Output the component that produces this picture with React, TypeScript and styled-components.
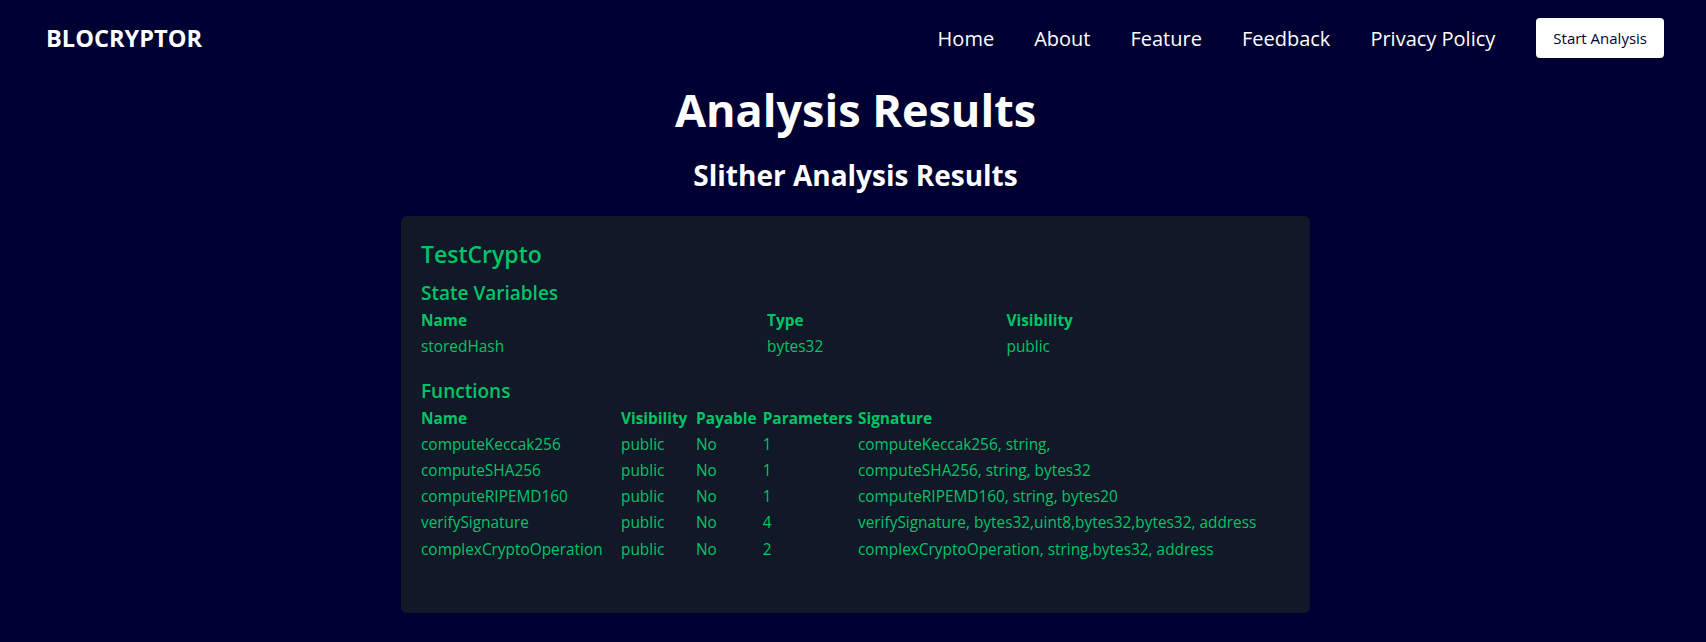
import React from 'react';
import styled, { createGlobalStyle } from 'styled-components';

const GREEN = '#00c466';

const GlobalStyle = createGlobalStyle`
  html, body {
    margin: 0;
    padding: 0;
    background: #000033;
  }
  body {
    font-family: "Open Sans", "Liberation Sans", sans-serif;
    color: #ffffff;
  }
`;

const Page = styled.div`
  min-height: 642px;
  background: #000033;
`;

const Navbar = styled.nav`
  display: flex;
  align-items: center;
  justify-content: space-between;
  height: 75px;
  padding: 1px 42px 0 46px;
  box-sizing: border-box;
`;

const Logo = styled.div`
  font-size: 23.6px;
  font-weight: 700;
  color: #ffffff;
`;

const NavRight = styled.div`
  display: flex;
  align-items: center;
  gap: 41px;
`;

const NavList = styled.ul`
  display: flex;
  align-items: center;
  gap: 40px;
  list-style: none;
  margin: 0;
  padding: 0;
`;

const NavLink = styled.a`
  color: #ffffff;
  font-size: 20px;
  text-decoration: none;
`;

const StartButton = styled.button`
  background: #ffffff;
  color: #000033;
  border: none;
  border-radius: 4px;
  height: 40px;
  padding: 0 17px;
  font-size: 15px;
  font-family: inherit;
  cursor: pointer;
`;

const Main = styled.main`
  padding-left: 5px;
  text-align: center;
`;

const Title = styled.h1`
  margin: 8px 0 0;
  font-size: 45px;
  line-height: 1.2;
  font-weight: 700;
`;

const Subtitle = styled.h2`
  margin: 22px 0 0;
  font-size: 28px;
  line-height: 1.2;
  font-weight: 700;
`;

const Card = styled.section`
  width: 909px;
  margin: 23px auto 0;
  box-sizing: border-box;
  padding: 25px 20px 50px;
  background: #111827;
  border-radius: 6px;
  text-align: left;
  color: ${GREEN};
`;

const ContractName = styled.h3`
  margin: 0;
  font-size: 23px;
  line-height: 1.2;
  font-weight: 600;
`;

const SectionTitle = styled.h4<{ $top: number }>`
  margin: ${(p) => p.$top}px 0 0;
  font-size: 19px;
  line-height: 1.2;
  font-weight: 600;
`;

const Table = styled.table<{ $top: number }>`
  width: 100%;
  margin-top: ${(p) => p.$top}px;
  border-collapse: collapse;
  table-layout: fixed;
`;

const Th = styled.th`
  padding: 0;
  text-align: left;
  font-size: 15.4px;
  font-weight: 700;
  line-height: 26.1px;
  white-space: nowrap;
`;

const Td = styled.td`
  padding: 0;
  text-align: left;
  font-size: 15.4px;
  font-weight: 400;
  line-height: 26.1px;
  white-space: nowrap;
`;

const stateVars = [{ name: 'storedHash', type: 'bytes32', visibility: 'public' }];

const functions = [
  { name: 'computeKeccak256', visibility: 'public', payable: 'No', params: '1', sig: 'computeKeccak256, string,' },
  { name: 'computeSHA256', visibility: 'public', payable: 'No', params: '1', sig: 'computeSHA256, string, bytes32' },
  { name: 'computeRIPEMD160', visibility: 'public', payable: 'No', params: '1', sig: 'computeRIPEMD160, string, bytes20' },
  { name: 'verifySignature', visibility: 'public', payable: 'No', params: '4', sig: 'verifySignature, bytes32,uint8,bytes32,bytes32, address' },
  { name: 'complexCryptoOperation', visibility: 'public', payable: 'No', params: '2', sig: 'complexCryptoOperation, string,bytes32, address' },
];

export default function App() {
  return (
    <Page>
      <GlobalStyle />
      <Navbar>
        <Logo>BLOCRYPTOR</Logo>
        <NavRight>
          <NavList>
            <li><NavLink href="#">Home</NavLink></li>
            <li><NavLink href="#">About</NavLink></li>
            <li><NavLink href="#">Feature</NavLink></li>
            <li><NavLink href="#">Feedback</NavLink></li>
            <li><NavLink href="#">Privacy Policy</NavLink></li>
          </NavList>
          <StartButton>Start Analysis</StartButton>
        </NavRight>
      </Navbar>
      <Main>
        <Title>Analysis Results</Title>
        <Subtitle>Slither Analysis Results</Subtitle>
        <Card>
          <ContractName>TestCrypto</ContractName>
          <SectionTitle $top={13.6}>State Variables</SectionTitle>
          <Table $top={3.7}>
            <colgroup>
              <col style={{ width: 346 }} />
              <col style={{ width: 239.5 }} />
              <col />
            </colgroup>
            <thead>
              <tr>
                <Th>Name</Th>
                <Th>Type</Th>
                <Th>Visibility</Th>
              </tr>
            </thead>
            <tbody>
              {stateVars.map((v) => (
                <tr key={v.name}>
                  <Td>{v.name}</Td>
                  <Td>{v.type}</Td>
                  <Td>{v.visibility}</Td>
                </tr>
              ))}
            </tbody>
          </Table>
          <SectionTitle $top={19.8}>Functions</SectionTitle>
          <Table $top={3}>
            <colgroup>
              <col style={{ width: 200 }} />
              <col style={{ width: 75 }} />
              <col style={{ width: 66.7 }} />
              <col style={{ width: 95.3 }} />
              <col />
            </colgroup>
            <thead>
              <tr>
                <Th>Name</Th>
                <Th>Visibility</Th>
                <Th>Payable</Th>
                <Th>Parameters</Th>
                <Th>Signature</Th>
              </tr>
            </thead>
            <tbody>
              {functions.map((f) => (
                <tr key={f.name}>
                  <Td>{f.name}</Td>
                  <Td>{f.visibility}</Td>
                  <Td>{f.payable}</Td>
                  <Td>{f.params}</Td>
                  <Td>{f.sig}</Td>
                </tr>
              ))}
            </tbody>
          </Table>
        </Card>
      </Main>
    </Page>
  );
}
